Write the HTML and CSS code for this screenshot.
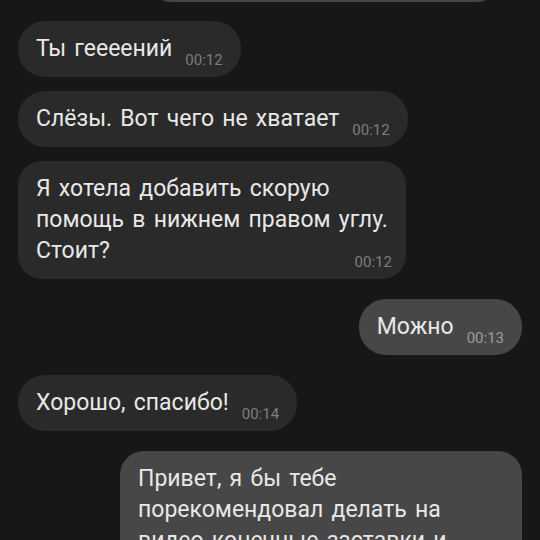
FILE: index.html
```html
<!DOCTYPE html>
<html lang="ru">
<head>
<meta charset="utf-8">
<link rel="stylesheet" href="styles.css">
</head>
<body>
<div class="chat">
  <div class="msg out top-cut"></div>
  <div class="msg in first"><span class="text">Ты геееений</span><span class="time">00:12</span></div>
  <div class="msg in same"><span class="text">Слёзы. Вот чего не хватает</span><span class="time">00:12</span></div>
  <div class="msg in same multi"><span class="text">Я хотела добавить скорую<br>помощь в нижнем правом углу.<br>Стоит?</span><span class="time">00:12</span></div>
  <div class="msg out switch"><span class="text">Можно</span><span class="time">00:13</span></div>
  <div class="msg in switch"><span class="text">Хорошо, спасибо!</span><span class="time">00:14</span></div>
  <div class="msg out switch multi wide"><span class="text">Привет, я бы тебе<br>порекомендовал делать на<br>видео конечные заставки и<br>подписи к ним</span><span class="time">00:15</span></div>
</div>
</body>
</html>
```
FILE: styles.css
```css
html, body {
  margin: 0;
  padding: 0;
  background: #171717;
  height: 100%;
  overflow: hidden;
}
.chat {
  display: flex;
  flex-direction: column;
  align-items: flex-start;
  padding: 0 18px;
  font-family: Roboto, "Noto Sans", sans-serif;
}
.msg {
  display: flex;
  align-items: flex-end;
  gap: 13px;
  padding: 12px 18px 9px 18px;
  border-radius: 27px;
  box-sizing: border-box;
}
.msg.in {
  background: #2a2a2a;
  align-self: flex-start;
}
.msg.out {
  background: #474747;
  align-self: flex-end;
}
.text {
  font-size: 23px;
  line-height: 31px;
  word-spacing: 2.5px;
  color: #e8e8e8;
  margin-bottom: 4px;
  white-space: nowrap;
}
.time {
  font-size: 15px;
  line-height: 15px;
  color: #7e7e7e;
  white-space: nowrap;
}
.msg.out .time {
  color: #9c9c9c;
}
.multi {
  flex-direction: column;
  gap: 0;
  border-radius: 24px;
}
.multi .text {
  align-self: stretch;
}
.multi .time {
  align-self: flex-end;
  margin-top: -15px;
  margin-right: -4px;
}
.top-cut {
  width: 358px;
  height: 60px;
  margin-top: -58px;
  margin-right: 19px;
}
.first {
  margin-top: 19px;
}
.same {
  margin-top: 14px;
}
.switch {
  margin-top: 20px;
}
.wide {
  width: 402px;
}
```
